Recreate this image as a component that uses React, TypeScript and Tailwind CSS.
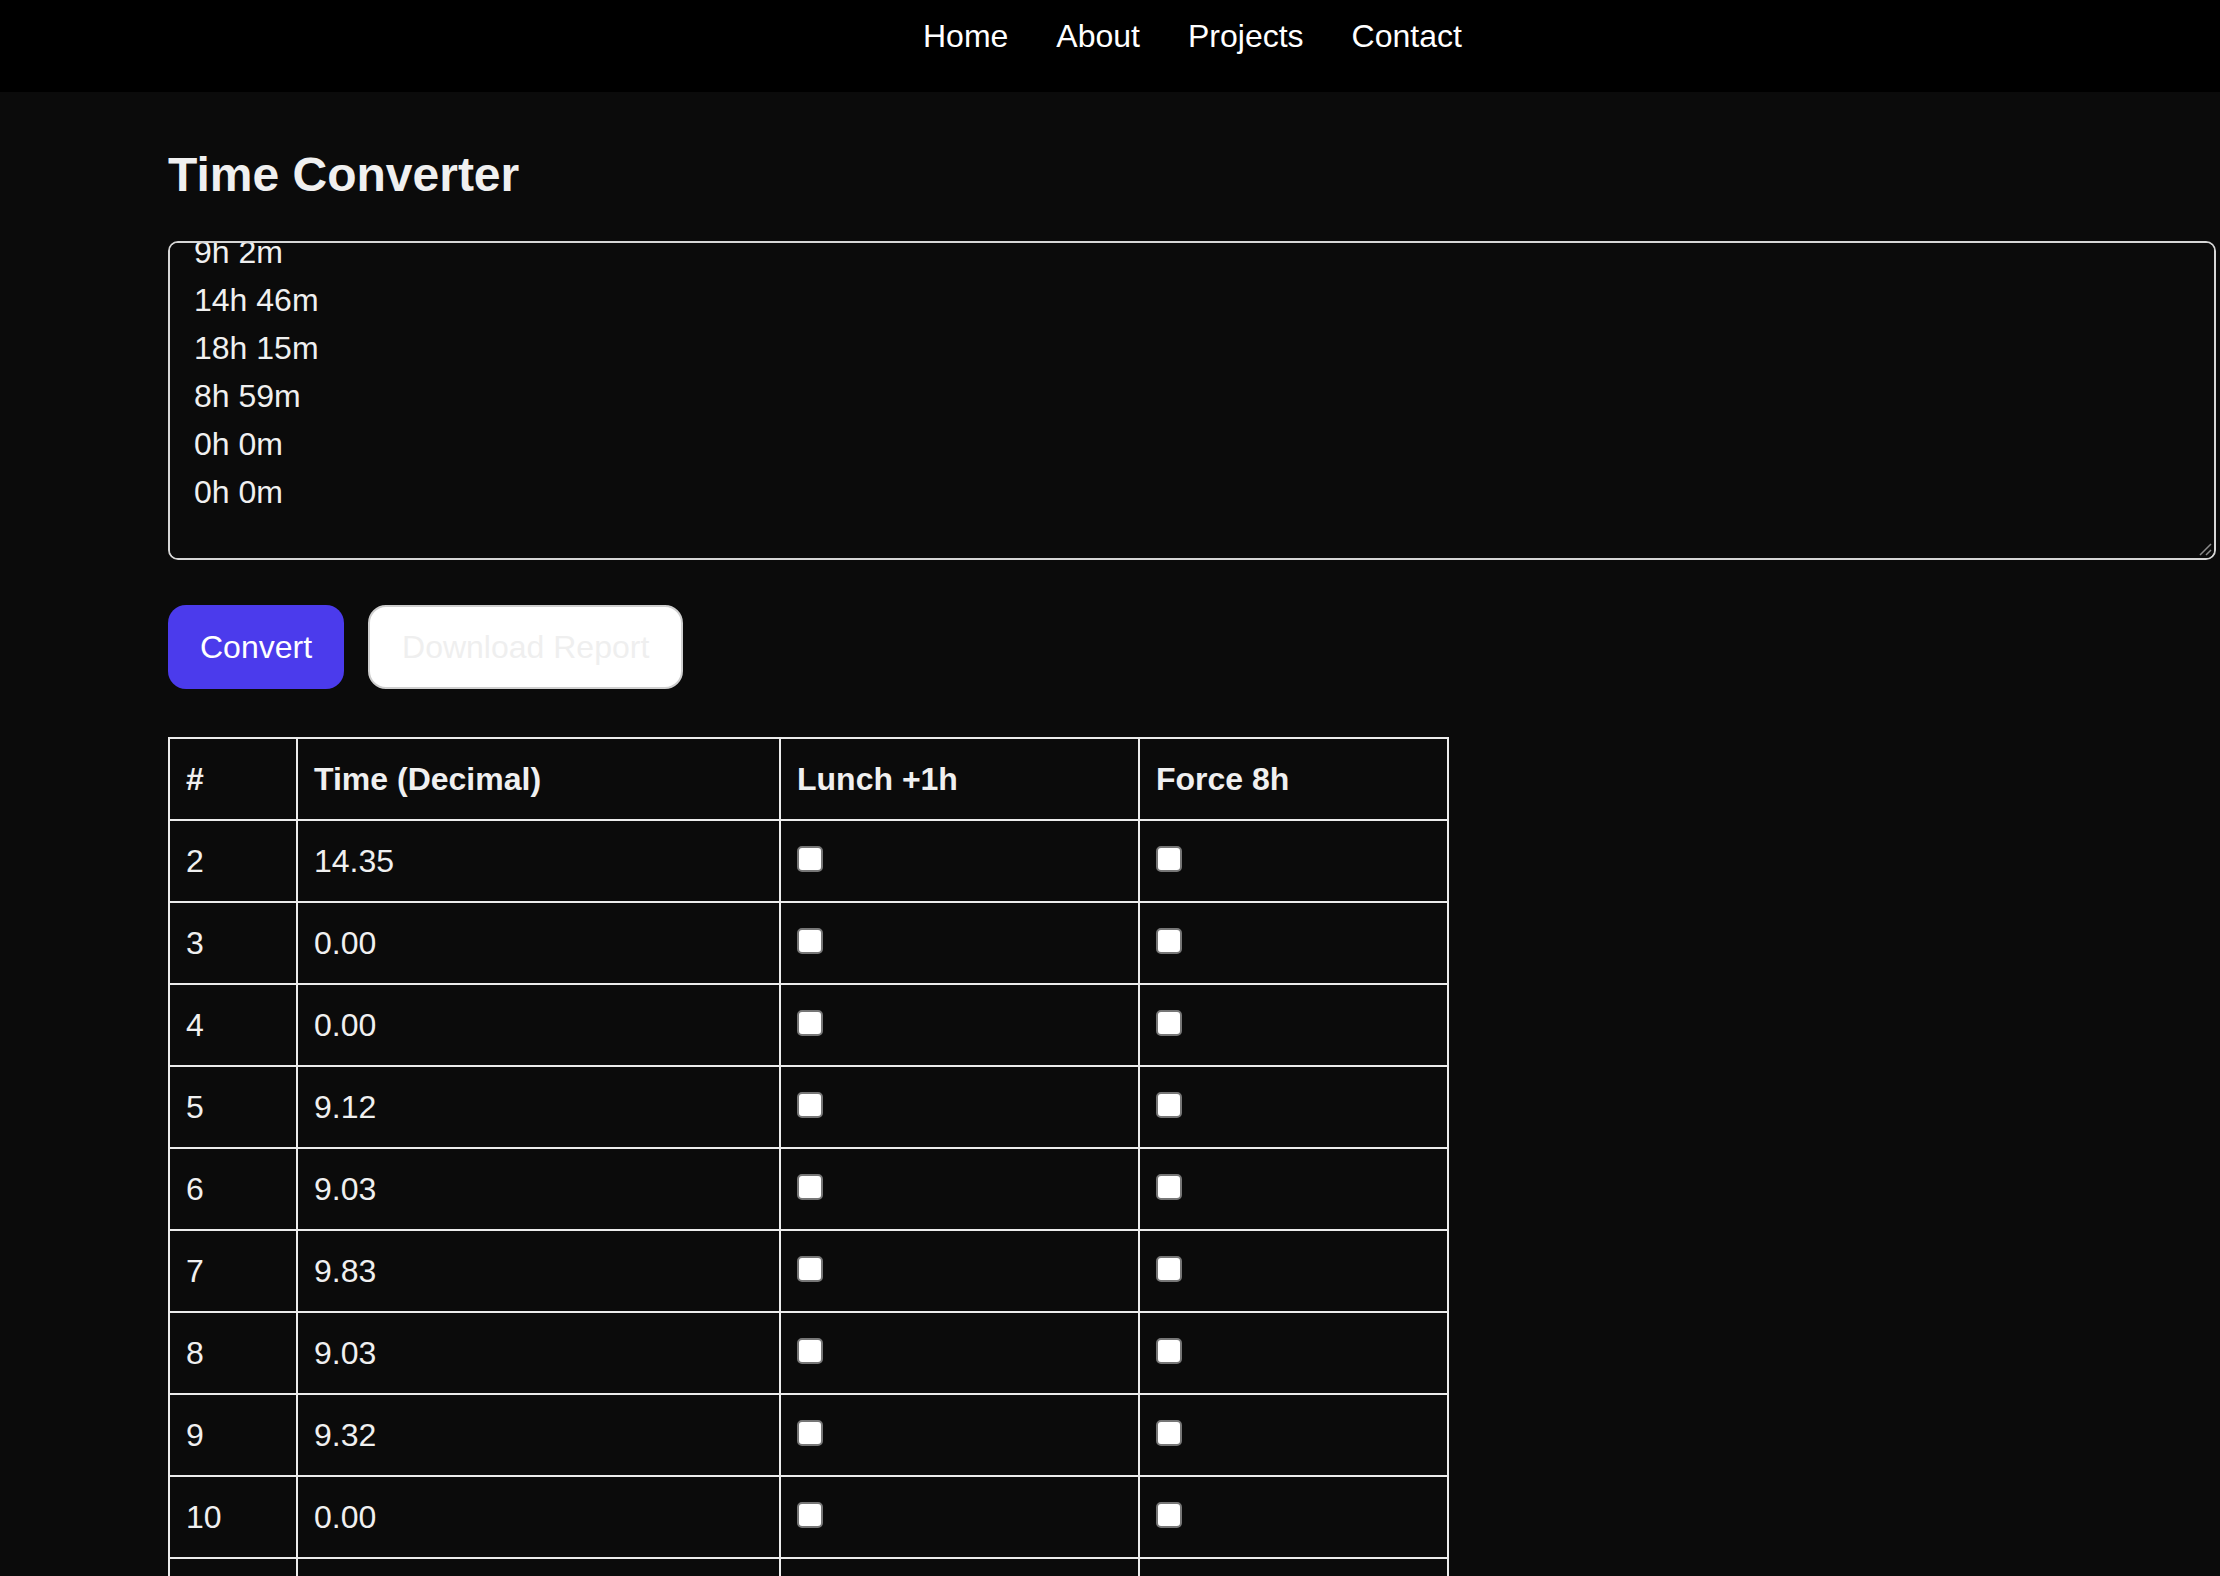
import { useEffect, useRef } from "react";

const navLinks = ["Home", "About", "Projects", "Contact"];

// textarea input, one entry per line
const inputLines = [
  "8h 30m",
  "14h 21m",
  "0h 0m",
  "0h 0m",
  "9h 7m",
  "9h 2m",
  "9h 50m",
  "9h 2m",
  "9h 19m",
  "0h 0m",
  "9h 2m",
  "14h 46m",
  "18h 15m",
  "8h 59m",
  "0h 0m",
  "0h 0m",
];

const rows = [
  { id: 2, time: "14.35" },
  { id: 3, time: "0.00" },
  { id: 4, time: "0.00" },
  { id: 5, time: "9.12" },
  { id: 6, time: "9.03" },
  { id: 7, time: "9.83" },
  { id: 8, time: "9.03" },
  { id: 9, time: "9.32" },
  { id: 10, time: "0.00" },
  { id: 11, time: "9.03" },
  { id: 12, time: "14.77" },
];

function Check() {
  return (
    <input
      type="checkbox"
      className="h-[26px] w-[26px] appearance-none rounded-[5px] border-2 border-[#767676] bg-white align-baseline"
    />
  );
}

export default function App() {
  const areaRef = useRef<HTMLTextAreaElement>(null);

  useEffect(() => {
    // keep the last lines in view, like after pasting
    if (areaRef.current) areaRef.current.scrollTop = 48 * inputLines.length - 249;
  }, []);

  return (
    <div className="h-screen overflow-hidden bg-[#0b0b0b] font-[family-name:'Liberation_Sans',Arial,sans-serif] text-[#f0f0f0]">
      {/* Nav */}
      <nav className="h-[92px] bg-black pt-[12px]">
        <ul className="flex gap-[48px] pl-[923px] text-[32px] leading-[48px] text-white">
          {navLinks.map((l) => (
            <li key={l}>
              <a href="#">{l}</a>
            </li>
          ))}
        </ul>
      </nav>

      <main className="pl-[168px]">
        <h1 className="mt-[55px] text-[48px] font-bold leading-[56px]">Time Converter</h1>

        <div className="relative mt-[38px] w-[2048px]">
          <textarea
            ref={areaRef}
            defaultValue={inputLines.join("\n") + "\n"}
            className="block h-[319px] w-full resize-none rounded-[10px] border-2 border-[#d6d6d6] bg-[#0b0b0b] px-[24px] py-[24px] font-[family-name:'Liberation_Sans',Arial,sans-serif] text-[32px] leading-[48px] text-[#f0f0f0] outline-none [scrollbar-width:none]"
          />
          {/* resize grip */}
          <svg className="pointer-events-none absolute bottom-[4px] right-[4px] h-[14px] w-[14px]" viewBox="0 0 14 14">
            <path d="M2 13 L13 2 M8 13 L13 8" stroke="#8a8a8a" strokeWidth="1.5" />
          </svg>
        </div>

        <div className="mt-[45px] flex gap-[24px]">
          <button className="h-[84px] rounded-[18px] bg-[#4b3bec] px-[32px] text-[32px] text-white">
            Convert
          </button>
          <button
            disabled
            className="h-[84px] rounded-[18px] border-2 border-[#cfcfcf] bg-white px-[32px] text-[32px] text-[#efefef]"
          >
            Download Report
          </button>
        </div>

        <table className="mt-[48px] border-collapse text-left text-[32px] leading-[48px]">
          <thead>
            <tr>
              <th className="w-[128px] border-2 border-[#ececec] p-[16px] font-bold">#</th>
              <th className="w-[483px] border-2 border-[#ececec] p-[16px] font-bold">Time (Decimal)</th>
              <th className="w-[359px] border-2 border-[#ececec] p-[16px] font-bold">Lunch +1h</th>
              <th className="w-[309px] border-2 border-[#ececec] p-[16px] font-bold">Force 8h</th>
            </tr>
          </thead>
          <tbody>
            {rows.map((r) => (
              <tr key={r.id}>
                <td className="border-2 border-[#ececec] p-[16px]">{r.id}</td>
                <td className="border-2 border-[#ececec] p-[16px]">{r.time}</td>
                <td className="border-2 border-[#ececec] p-[16px]">
                  <Check />
                </td>
                <td className="border-2 border-[#ececec] p-[16px]">
                  <Check />
                </td>
              </tr>
            ))}
          </tbody>
        </table>
      </main>
    </div>
  );
}
